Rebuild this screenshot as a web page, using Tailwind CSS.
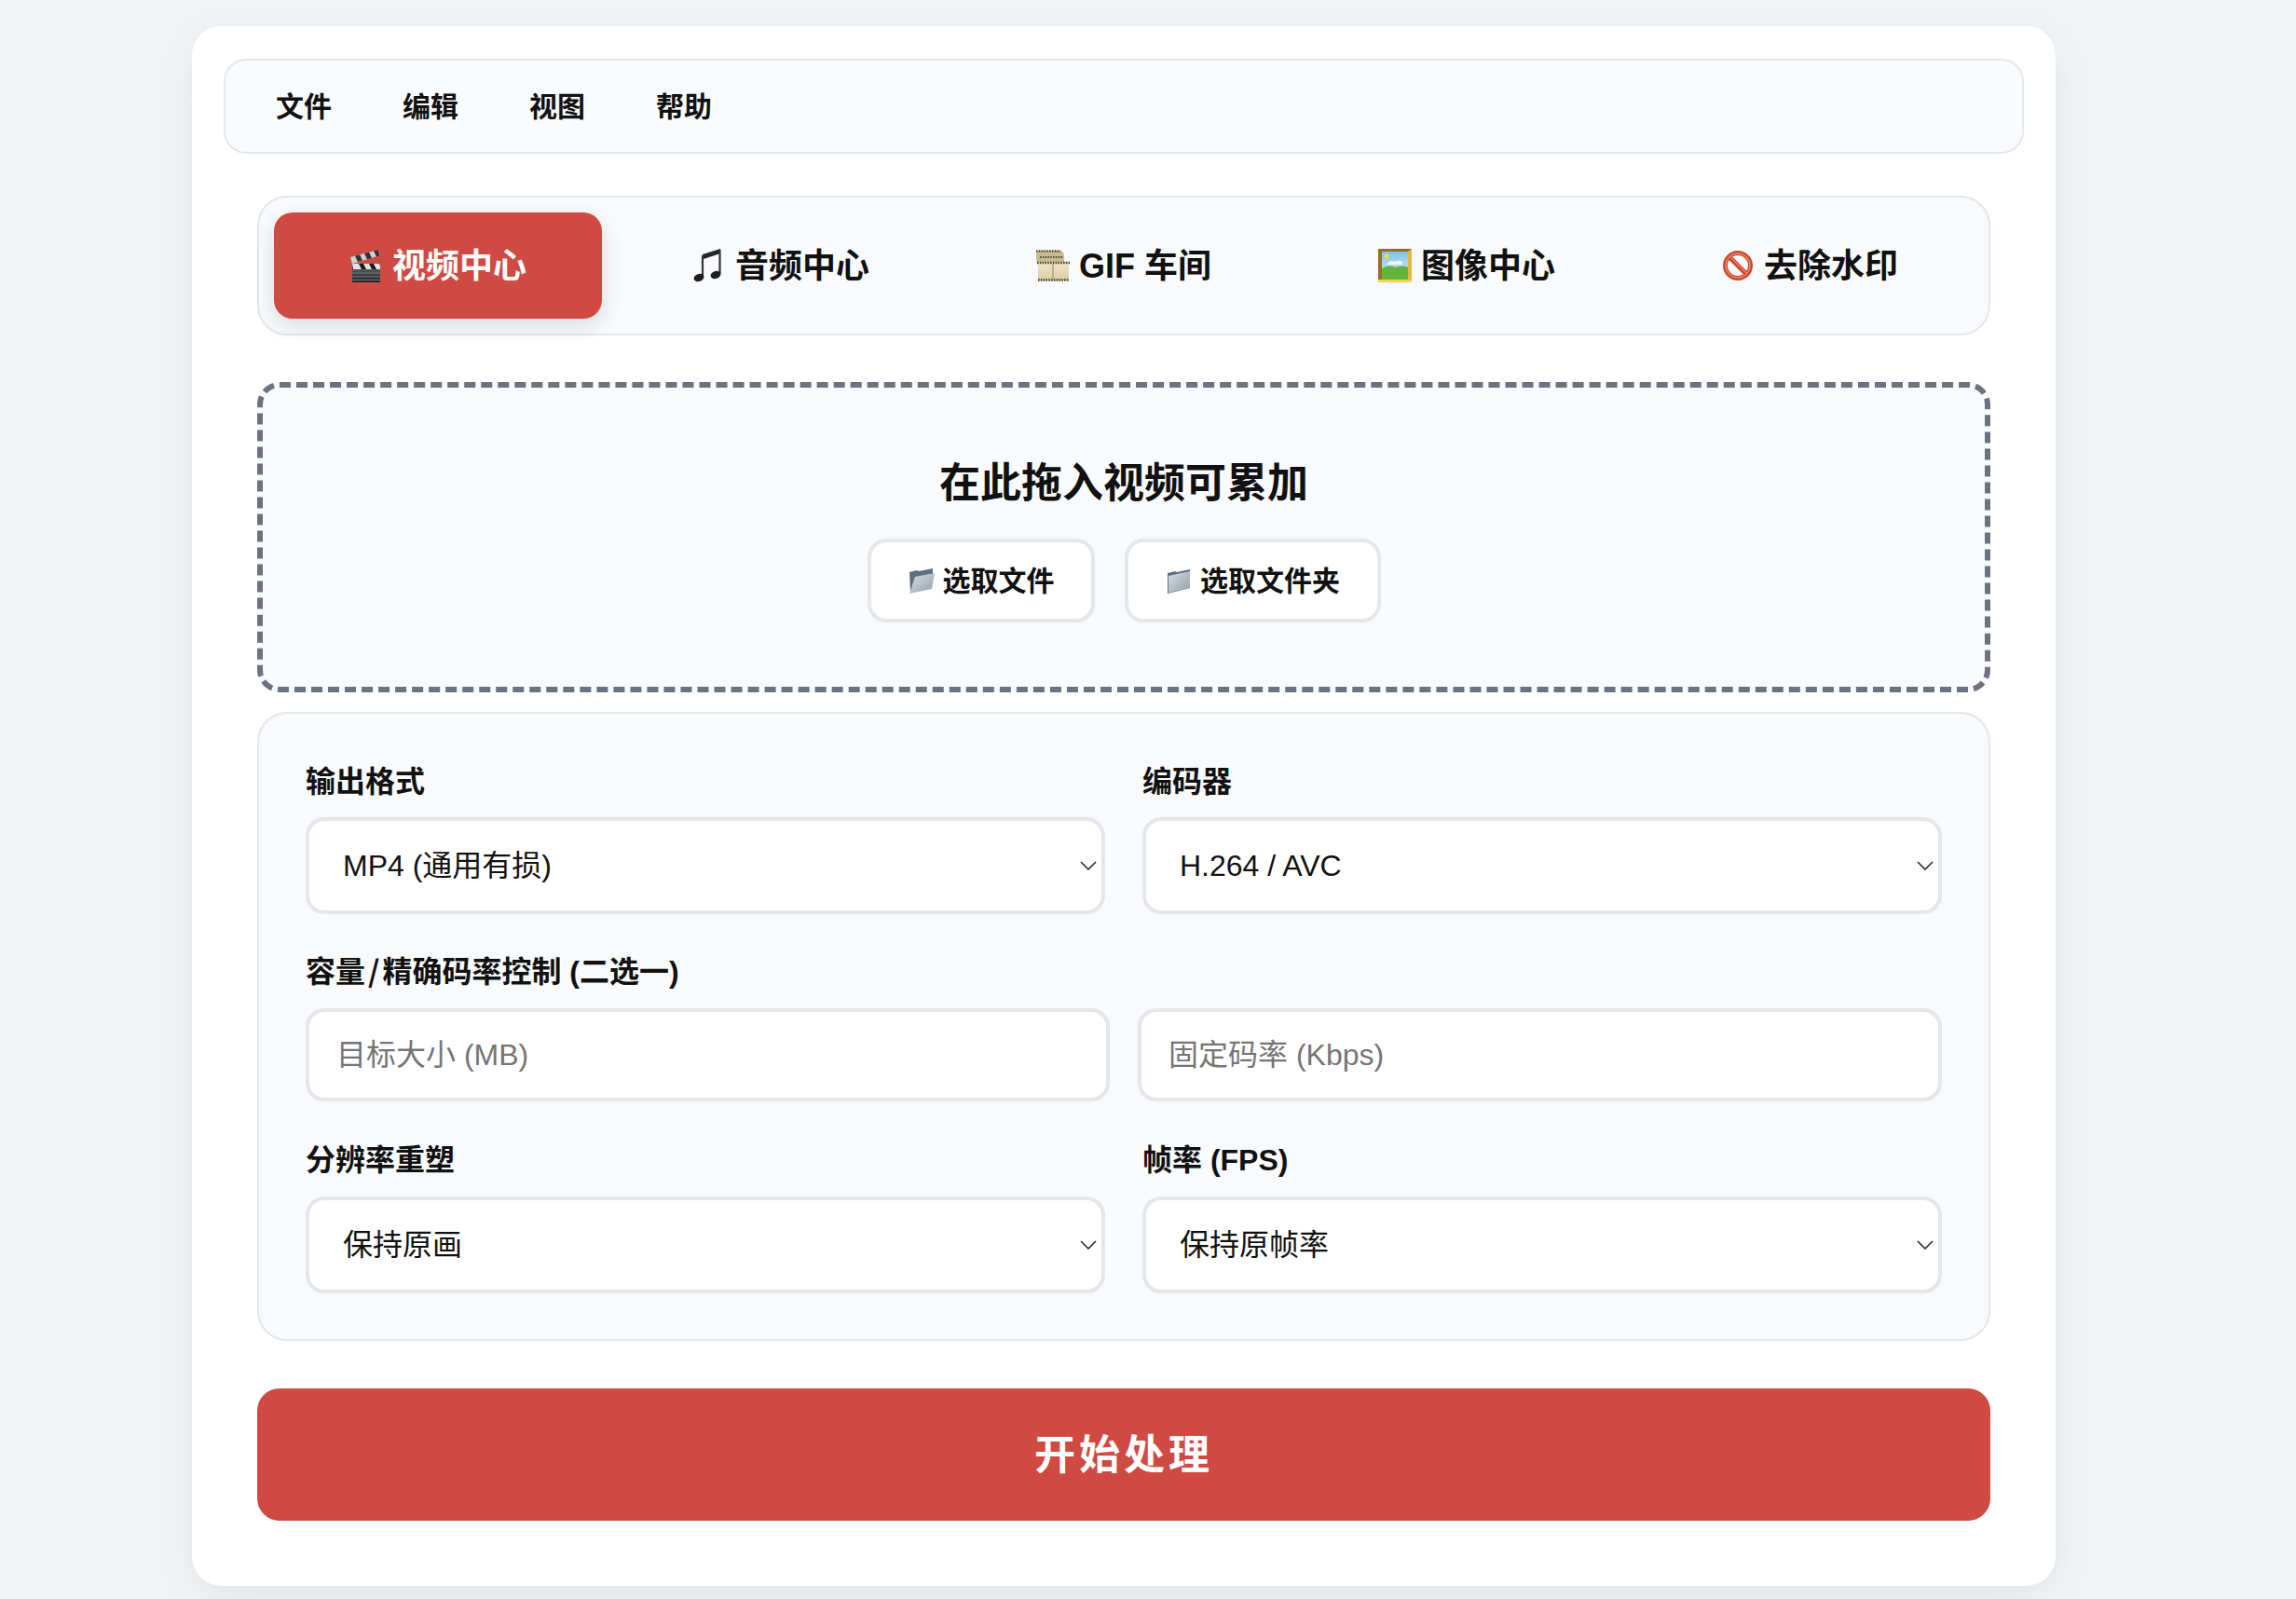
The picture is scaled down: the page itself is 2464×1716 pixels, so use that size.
<!DOCTYPE html>
<html lang="zh-CN">
<head>
    <meta charset="UTF-8">
    <meta name="viewport" content="width=device-width, initial-scale=1.0">
    <title>视频处理</title>
    <script src="https://cdn.jsdelivr.net/npm/@tailwindcss/browser@4"></script>
</head>
<body class="bg-[#f3f4f6] text-[#111] font-['Liberation_Sans','Noto_Sans_CJK_SC',sans-serif] min-h-[1716px] overflow-hidden">

<div class="ml-[206px] mt-[28px] w-[2000px] h-[1674px] bg-white rounded-[32px] shadow-[0_12px_48px_rgba(0,0,0,0.07)] px-[34px] pt-[35px]">

    <!-- Menu bar -->
    <div class="h-[102px] flex items-center pl-[20px] bg-[#f9fafb] border-2 border-[#e5e7eb] rounded-[24px] text-[30px] font-semibold">
        <span class="pl-[34px] pr-[38px]">文件</span>
        <span class="px-[38px]">编辑</span>
        <span class="px-[38px]">视图</span>
        <span class="px-[38px]">帮助</span>
    </div>

    <div class="px-[36px]">
        <!-- Tabs -->
        <div class="mt-[45px] h-[150px] flex gap-4 p-4 bg-[#f9fafb] border-2 border-[#e5e7eb] rounded-[32px] text-[36px] font-semibold">
            <div class="flex-1 flex items-center justify-center gap-[10px] bg-[#cf4a43] text-white rounded-[20px] shadow-[0_8px_24px_rgba(0,0,0,0.12)]">
                <svg class="w-9 h-9" viewBox="0 0 36 36">
                    <defs><linearGradient id="clapBody" x1="0" y1="0" x2="0" y2="1"><stop offset="0" stop-color="#55565a"/><stop offset="1" stop-color="#1f2023"/></linearGradient></defs>
                    <path d="M1 9 31 1l2 6L3 16z" fill="#cfcfcf"/>
                    <path d="M6 7.700 9 14l5-1.400-3-6.300zM16 5l3 6.300 5-1.400-3-6.300zM26 2.300l3 6.300 3.500-1L31 1z" fill="#333336"/>
                    <path d="M3 16h30v6H3z" fill="#1d1d1f"/>
                    <path d="M3 16h7l3 6H4zM15 16h6l3 6h-6zM26 16h6l1 2v4h-4z" fill="#e4e4e4"/>
                    <path d="M3 22h30v14H3z" fill="url(#clapBody)"/>
                    <path d="M3 26h30M3 30h30M3 33.500h30" stroke="#77787c" stroke-width="1"/>
                </svg>
                <span class="pt-[2px]">视频中心</span>
            </div>
            <div class="flex-1 flex items-center justify-center gap-[10px]">
                <svg class="w-9 h-9" viewBox="0 0 36 36">
                    <path d="M11 6 30 0v5L12 11z" fill="#26262a"/>
                    <path d="M11 7v24M29.500 1v26" stroke="#35353a" stroke-width="2.200" fill="none"/>
                    <ellipse cx="7" cy="31" rx="5.500" ry="4" fill="#1f1f22" transform="rotate(-18 7 31)"/>
                    <ellipse cx="25" cy="28" rx="5.500" ry="4" fill="#1f1f22" transform="rotate(-18 25 28)"/>
                </svg>
                <span class="pt-[2px]">音频中心</span>
            </div>
            <div class="flex-1 flex items-center justify-center gap-[10px]">
                <svg class="w-9 h-9" viewBox="0 0 36 36">
                    <defs><linearGradient id="filmFill" x1="0" y1="0" x2="0" y2="1"><stop offset="0" stop-color="#f0e7ca"/><stop offset="1" stop-color="#d9cda2"/></linearGradient></defs>
                    <path d="M0 2h25c4 0 5 3 5 7v6H3c-3 0-3-3-3-5z" fill="#c9bc90"/>
                    <path d="M0 2.500h26" stroke="#5b5035" stroke-width="2.400" stroke-dasharray="1.600 1.200"/>
                    <path d="M4 9h25" stroke="#5b5035" stroke-width="2" stroke-dasharray="1.600 1.200"/>
                    <path d="M2 14h33v20H2z" fill="url(#filmFill)"/>
                    <path d="M1 15h35M2 33.500h33" stroke="#4b4128" stroke-width="2.400" stroke-dasharray="1.600 1.200"/>
                    <path d="M18 16v16" stroke="#a2946a" stroke-width="1.200"/>
                </svg>
                <span class="pt-[2px]">GIF 车间</span>
            </div>
            <div class="flex-1 flex items-center justify-center gap-[10px]">
                <svg class="w-9 h-9" viewBox="0 0 36 36">
                    <defs><linearGradient id="skyFill" x1="0" y1="0" x2="0" y2="1"><stop offset="0" stop-color="#7fc4e8"/><stop offset="1" stop-color="#dfeef2"/></linearGradient></defs>
                    <path d="M0 0h36v36H0z" fill="#e3b93f"/>
                    <path d="M0 0h36l-4 3H4v30l-4 3z" fill="#93702a"/>
                    <path d="M0 36h36v-3H0z" fill="#f3d35a"/>
                    <path d="M4 3h28v30H4z" fill="url(#skyFill)"/>
                    <circle cx="9" cy="8" r="2.500" fill="#f5d94a"/>
                    <path d="M10 15c3-2 6-2 8-1 3-2 6-1 8 0v3H10z" fill="#f4f6f4"/>
                    <path d="M4 33V21c6-3 10-3 14-1 5-2 10-2 14 0v13z" fill="#63b43d"/>
                </svg>
                <span class="pt-[2px]">图像中心</span>
            </div>
            <div class="flex-1 flex items-center justify-center gap-[10px]">
                <svg class="w-9 h-9" viewBox="0 0 36 36">
                    <circle cx="18" cy="18" r="13.500" fill="none" stroke="#d2452a" stroke-width="5"/>
                    <path d="m8.500 8.500 19 19" stroke="#d2452a" stroke-width="5"/>
                    <circle cx="18" cy="18" r="13" fill="none" stroke="#f2b3a0" stroke-width="0.900"/>
                    <path d="m9 8 19 19" stroke="#f2b3a0" stroke-width="0.900"/>
                </svg>
                <span class="pt-[2px]">去除水印</span>
            </div>
        </div>

        <!-- Drop zone -->
        <div class="mt-[50px] h-[333px] flex flex-col items-center pt-[75px] bg-[#f9fafb] border-[6px] border-dashed border-[#6b7280] rounded-[24px]">
            <h2 class="text-[44px] leading-[56px] font-bold">在此拖入视频可累加</h2>
            <div class="mt-[31px] flex gap-[32px] text-[30px] font-semibold">
                <button class="h-[90px] w-[244px] flex items-center justify-center gap-[8px] bg-white border-4 border-[#e5e7eb] rounded-[20px]">
                    <svg class="w-[30px] h-[30px]" viewBox="0 0 30 30">
                        <defs><linearGradient id="openFront" x1="0" y1="0" x2="1" y2="1"><stop offset="0" stop-color="#d5dce1"/><stop offset="1" stop-color="#93a2ae"/></linearGradient></defs>
                        <path d="M2 6l8-2 2 1 15-3v8L3 27z" fill="#5e7080"/>
                        <path d="M8 11 29 7l-3 17L2 29z" fill="url(#openFront)"/>
                    </svg>
                    <span>选取文件</span>
                </button>
                <button class="h-[90px] w-[275px] flex items-center justify-center gap-[8px] bg-white border-4 border-[#e5e7eb] rounded-[20px]">
                    <svg class="w-[30px] h-[30px]" viewBox="0 0 30 30">
                        <defs><linearGradient id="closedFront" x1="0" y1="0" x2="1" y2="1"><stop offset="0" stop-color="#d5dce1"/><stop offset="1" stop-color="#93a2ae"/></linearGradient></defs>
                        <path d="M3 7l8-2 2 1 14-3v20L3 29z" fill="#5e7080"/>
                        <path d="M4 10 27 5v18L4 28z" fill="url(#closedFront)"/>
                    </svg>
                    <span>选取文件夹</span>
                </button>
            </div>
        </div>

        <!-- Settings -->
        <div class="mt-[21px] h-[675px] px-[50px] pt-[53px] bg-[#f9fafb] border-2 border-[#e5e7eb] rounded-[32px]">
            <div class="grid grid-cols-2 gap-x-10">
                <div>
                    <label class="block text-[32px] leading-[40px] font-semibold mb-[18px]">输出格式</label>
                    <div class="relative">
                        <select class="w-full h-[104px] pl-[36px] text-[32px] appearance-none bg-white border-4 border-[#e5e7eb] rounded-[20px]"><option>MP4 (通用有损)</option></select>
                        <svg class="absolute right-[9px] top-[47px] w-[18px] h-[10px]" viewBox="0 0 18 10" fill="none" stroke="#1f2937" stroke-width="1.600"><path d="M1 1l8 8 8-8"/></svg>
                    </div>
                </div>
                <div>
                    <label class="block text-[32px] leading-[40px] font-semibold mb-[18px]">编码器</label>
                    <div class="relative">
                        <select class="w-full h-[104px] pl-[36px] text-[32px] appearance-none bg-white border-4 border-[#e5e7eb] rounded-[20px]"><option>H.264 / AVC</option></select>
                        <svg class="absolute right-[9px] top-[47px] w-[18px] h-[10px]" viewBox="0 0 18 10" fill="none" stroke="#1f2937" stroke-width="1.600"><path d="M1 1l8 8 8-8"/></svg>
                    </div>
                </div>
            </div>

            <label class="block mt-[42px] h-[40px] text-[32px] leading-[40px] font-semibold mb-[19px]">容量<span class="mx-[3px] leading-none font-['Noto_Sans_CJK_SC']">/</span>精确码率控制 (二选一)</label>
            <div class="grid grid-cols-2 gap-x-[30px]">
                <input class="h-[100px] px-[29px] text-[32px] bg-white border-4 border-[#e5e7eb] rounded-[20px] placeholder:text-[#757575]" placeholder="目标大小 (MB)">
                <input class="h-[100px] px-[29px] text-[32px] bg-white border-4 border-[#e5e7eb] rounded-[20px] placeholder:text-[#757575]" placeholder="固定码率 (Kbps)">
            </div>

            <div class="mt-[43px] grid grid-cols-2 gap-x-10">
                <div>
                    <label class="block text-[32px] leading-[40px] font-semibold mb-[19px]">分辨率重塑</label>
                    <div class="relative">
                        <select class="w-full h-[104px] pl-[36px] text-[32px] appearance-none bg-white border-4 border-[#e5e7eb] rounded-[20px]"><option>保持原画</option></select>
                        <svg class="absolute right-[9px] top-[47px] w-[18px] h-[10px]" viewBox="0 0 18 10" fill="none" stroke="#1f2937" stroke-width="1.600"><path d="M1 1l8 8 8-8"/></svg>
                    </div>
                </div>
                <div>
                    <label class="block text-[32px] leading-[40px] font-semibold mb-[19px]">帧率 (FPS)</label>
                    <div class="relative">
                        <select class="w-full h-[104px] pl-[36px] text-[32px] appearance-none bg-white border-4 border-[#e5e7eb] rounded-[20px]"><option>保持原帧率</option></select>
                        <svg class="absolute right-[9px] top-[47px] w-[18px] h-[10px]" viewBox="0 0 18 10" fill="none" stroke="#1f2937" stroke-width="1.600"><path d="M1 1l8 8 8-8"/></svg>
                    </div>
                </div>
            </div>
        </div>

        <!-- Start button -->
        <button class="mt-[51px] w-full h-[142px] pt-[2px] bg-[#cf4a43] text-white text-[44px] font-bold tracking-[4px] rounded-[24px]">开始处理</button>
    </div>
</div>

</body>
</html>
